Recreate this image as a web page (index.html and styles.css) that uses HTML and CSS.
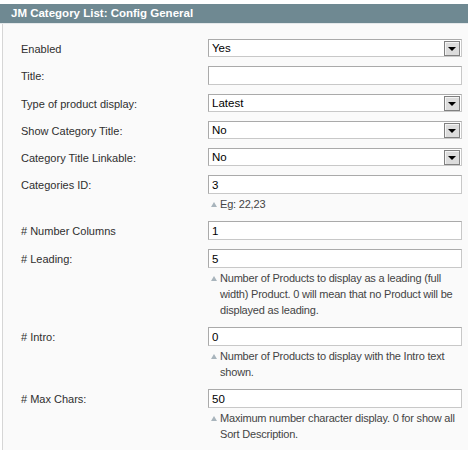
FILE: index.html
```html
<!DOCTYPE html>
<html>
<head>
<meta charset="utf-8">
<link rel="stylesheet" href="styles.css">
</head>
<body>
<div class="panel">
  <div class="head">JM Category List: Config General</div>
  <div class="fieldset">
    <div class="row">
      <label class="label">Enabled</label>
      <div class="value"><div class="select"><span class="sel-text">Yes</span><span class="sel-btn"><i></i></span></div></div>
    </div>
    <div class="row">
      <label class="label">Title:</label>
      <div class="value"><input class="input" type="text" value=""></div>
    </div>
    <div class="row">
      <label class="label">Type of product display:</label>
      <div class="value"><div class="select"><span class="sel-text">Latest</span><span class="sel-btn"><i></i></span></div></div>
    </div>
    <div class="row">
      <label class="label">Show Category Title:</label>
      <div class="value"><div class="select"><span class="sel-text">No</span><span class="sel-btn"><i></i></span></div></div>
    </div>
    <div class="row">
      <label class="label">Category Title Linkable:</label>
      <div class="value"><div class="select"><span class="sel-text">No</span><span class="sel-btn"><i></i></span></div></div>
    </div>
    <div class="row">
      <label class="label">Categories ID:</label>
      <div class="value"><input class="input" type="text" value="3">
        <p class="note">Eg: 22,23</p></div>
    </div>
    <div class="row">
      <label class="label"># Number Columns</label>
      <div class="value"><input class="input" type="text" value="1"></div>
    </div>
    <div class="row">
      <label class="label"># Leading:</label>
      <div class="value"><input class="input" type="text" value="5">
        <p class="note">Number of Products to display as a leading (full width) Product. 0 will mean that no Product will be displayed as leading.</p></div>
    </div>
    <div class="row">
      <label class="label"># Intro:</label>
      <div class="value"><input class="input" type="text" value="0">
        <p class="note">Number of Products to display with the Intro text shown.</p></div>
    </div>
    <div class="row">
      <label class="label"># Max Chars:</label>
      <div class="value"><input class="input" type="text" value="50">
        <p class="note">Maximum number character display. 0 for show all Sort Description.</p></div>
    </div>
  </div>
</div>
</body>
</html>
```

FILE: styles.css
```css
html, body {
  margin: 0;
  padding: 0;
  background: #ffffff;
}
body {
  font-family: "Liberation Sans", Arial, sans-serif;
  font-size: 11px;
  color: #2f2f2f;
  padding-top: 4px;
}
.panel {
  width: 468px;
}
.head {
  background: #6f8992;
  color: #ffffff;
  font-weight: bold;
  font-size: 11.5px;
  height: 19px;
  line-height: 19px;
  padding-left: 11px;
  border-bottom: 1px solid #e4e8ea;
}
.fieldset {
  margin-left: 2px;
  border-left: 1px solid #d6d6d6;
  background: #fafafa;
  padding: 15px 0 20px 18px;
  min-height: 400px;
}
.row {
  display: grid;
  grid-template-columns: 187px 254px;
  padding-bottom: 9px;
}
.label {
  line-height: 14px;
  padding-top: 3px;
  color: #2f2f2f;
}
.value {
  display: flex;
  flex-direction: column;
}
.input {
  box-sizing: border-box;
  width: 254px;
  height: 19px;
  margin: 0;
  border: 1px solid;
  border-color: #aaaaaa #c8c8c8 #c8c8c8 #aaaaaa;
  background: #ffffff;
  font-family: "Liberation Sans", Arial, sans-serif;
  font-size: 11.5px;
  color: #000000;
  padding: 0 3px;
  outline: none;
}
.select {
  box-sizing: border-box;
  width: 254px;
  height: 18px;
  border: 1px solid;
  border-color: #aaaaaa #c8c8c8 #c8c8c8 #aaaaaa;
  background: #ffffff;
  display: flex;
  align-items: center;
  justify-content: space-between;
  font-size: 11.5px;
  color: #000000;
}
.sel-text {
  padding-left: 3px;
}
.sel-btn {
  box-sizing: border-box;
  width: 16px;
  height: 15px;
  margin-right: 1px;
  border: 1px solid #808080;
  background: #dcdcdc;
  box-shadow: inset 1px 1px 0 #f4f4f4;
  display: flex;
  align-items: center;
  justify-content: center;
}
.sel-btn i {
  display: block;
  width: 0;
  height: 0;
  border-left: 4px solid transparent;
  border-right: 4px solid transparent;
  border-top: 4px solid #000000;
  margin-top: 1px;
}
.note {
  margin: 2px 0 0 0;
  padding-left: 12px;
  position: relative;
  line-height: 16px;
  color: #444444;
  letter-spacing: -0.2px;
}
.note::before {
  content: "";
  position: absolute;
  left: 3px;
  top: 6px;
  width: 0;
  height: 0;
  border-left: 3px solid transparent;
  border-right: 3px solid transparent;
  border-bottom: 5px solid #a8b4bc;
}
```
